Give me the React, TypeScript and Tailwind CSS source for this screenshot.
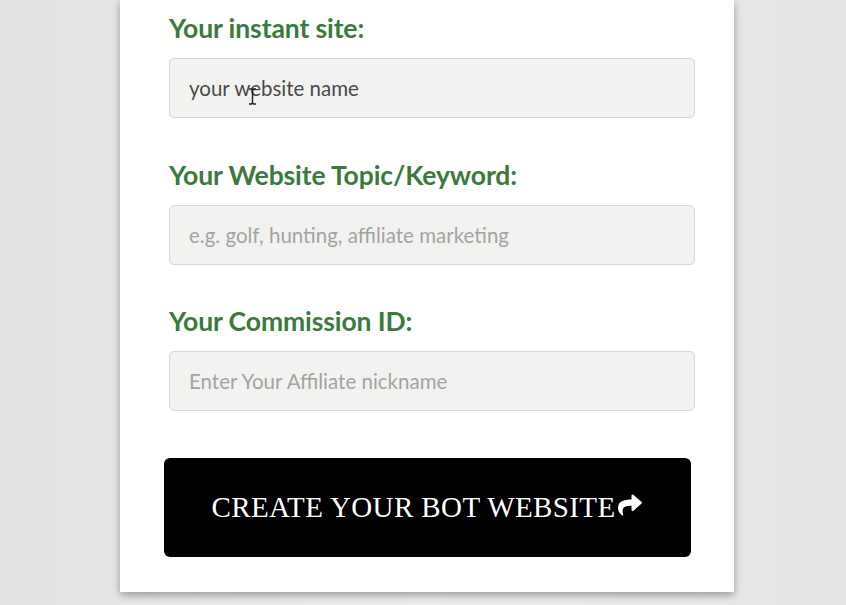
import { FaShare } from "react-icons/fa";

const fields = [
  { label: "Your instant site:", value: "your website name", placeholder: "" },
  { label: "Your Website Topic/Keyword:", value: "", placeholder: "e.g. golf, hunting, affiliate marketing" },
  { label: "Your Commission ID:", value: "", placeholder: "Enter Your Affiliate nickname" },
];

export default function App() {
  return (
    <div className="h-[605px] w-[846px] overflow-hidden bg-gradient-to-r from-[#e3e4e6] via-[#ebeced] to-[#e5e6e8] pl-[120px] font-['Lato',sans-serif]">
      <div className="w-[614px] h-[592px] bg-white shadow-[0_3px_8px_rgba(0,0,0,0.35)] pl-[49px] pr-[39px] pt-[13px]">
        {fields.map((f, i) => (
          <div key={i} className={i === 0 ? "" : i === 1 ? "mt-[42px]" : "mt-[41px]"}>
            <label className="block text-[26.5px] leading-[30px] font-bold text-[#3a7a3c] tracking-[-0.1px]">
              {f.label}
            </label>
            <div className="relative mt-[15px]">
              <input
                type="text"
                defaultValue={f.value}
                placeholder={f.placeholder}
                className="w-[526px] h-[60px] rounded-[5px] border border-[#d6d8d8] bg-[#f2f3f0] px-[19px] text-[20.5px] text-[#4a4a4a] placeholder:text-[#a3a3a3] outline-none"
              />
              {i === 0 && (
                <svg className="absolute left-[79px] top-[30px]" width="9" height="17" viewBox="0 0 9 17">
                  <path d="M1 1h2.5l1 1 1-1H8M4.5 2v13M1 16h2.5l1-1 1 1H8" stroke="#222" strokeWidth="1.4" fill="none" />
                </svg>
              )}
            </div>
          </div>
        ))}
        <button className="mt-[47px] -ml-[5px] w-[527px] h-[99px] rounded-[6px] bg-black text-white flex items-center justify-center font-['Liberation_Serif',serif] text-[29px] tracking-[0.4px]">
          <span>CREATE YOUR BOT WEBSITE</span>
          <FaShare className="w-[28px] h-[24px] -mt-[6px]" />
        </button>
      </div>
    </div>
  );
}
